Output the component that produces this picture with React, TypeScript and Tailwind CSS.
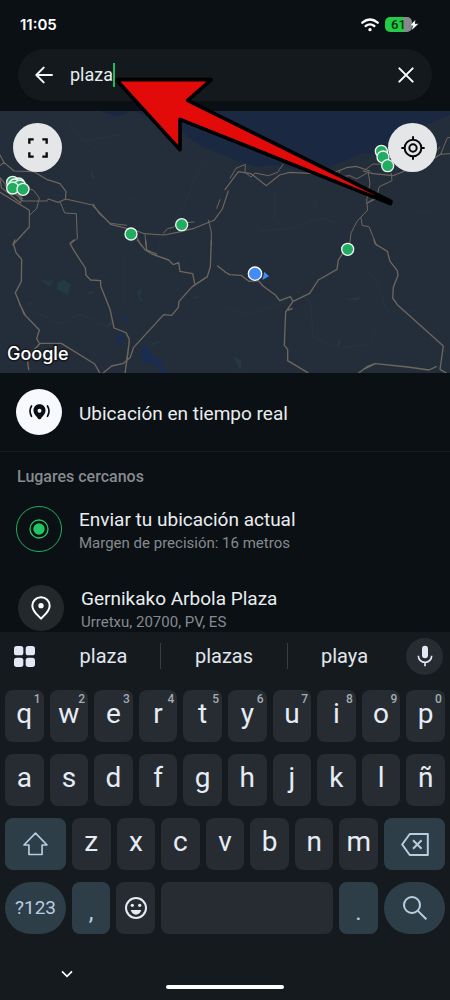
import React from "react";

const markers = [
  [38, 214], [56, 219], [44, 222], [60, 225], [38, 231], [69, 235],
  [393, 369], [545, 341], [1144, 121], [1149, 138], [1163, 164], [1043, 415],
];

function StatusBar() {
  return (
    <header className="flex h-[49px] shrink-0 items-center justify-between pl-5 pr-[31px]">
      <time className="font-['Inter',sans-serif] text-[15px] leading-5 font-semibold text-white">11:05</time>
      <div className="flex items-center gap-[6px]">
        <svg viewBox="0 0 54 42" className="h-[14px] w-[18px]" fill="none" stroke="#fff" strokeWidth="7" strokeLinecap="round" role="img" aria-label="Wi-Fi">
          <path d="M4 14Q27-5 50 14" />
          <path d="M14 24Q27 14 40 24" />
          <circle cx="27" cy="35" r="5" fill="#fff" stroke="none" />
        </svg>
        <div className="flex items-center">
          <div className="flex h-[15px] w-[27px] items-center justify-center rounded-[5px] bg-linear-to-r from-[#23cc45] from-70% to-[#85898c] to-70% text-[13px] leading-[15px] font-medium text-[#0e2f17]">
            61
          </div>
          <svg viewBox="0 0 30 36" className="-ml-[3px] h-[12px] w-[10px]" aria-hidden="true">
            <path d="M19 2 2 20h9L8 34 29 14H18Z" fill="#fff" stroke="#0b1014" strokeWidth="1" strokeLinejoin="round" />
          </svg>
        </div>
      </div>
    </header>
  );
}

function SearchBar() {
  return (
    <div className="px-[18px] pb-[10px]">
      <form role="search" className="flex h-[52px] items-center rounded-full bg-[#13191c] pl-[17px] pr-[18px]" onSubmit={(e) => e.preventDefault()}>
        <button type="button" aria-label="Atrás" className="mr-[17px]">
          <svg viewBox="0 0 54 54" className="size-[18px]" fill="none" stroke="#f4f6f7" strokeWidth="6" strokeLinecap="round" strokeLinejoin="round">
            <path d="M51 27H4M26 5 4 27l22 22" />
          </svg>
        </button>
        <input aria-label="Buscar" defaultValue="plaza" className="field-sizing-content bg-transparent text-[18px] leading-6 text-[#e9edef] outline-none" />
        <span className="h-6 w-[2px] bg-[#25b864]" />
        <button type="button" aria-label="Borrar" className="ml-auto">
          <svg viewBox="0 0 48 48" className="size-4" fill="none" stroke="#fff" strokeWidth="6" strokeLinecap="round">
            <path d="m4 4 40 40M44 4 4 44" />
          </svg>
        </button>
      </form>
    </div>
  );
}

function Map() {
  return (
    <section aria-label="Mapa" className="relative shrink-0">
      <svg viewBox="0 0 1350 786" className="block w-full" fill="none" strokeLinejoin="round" strokeLinecap="round">
        <rect width="1350" height="789" fill="#242e3b" />
        <path d="M300 0 350 17 400 0 450 22 520 30 560 74 600 104 675 134 720 154 770 167 830 163 900 177 990 167 1090 127 1160 132 1210 52 1280 42 1350 12V0Z" fill="#1a2941" />
        <g stroke="#273340" strokeWidth="3">
          <path d="M200 20 250 90 370 70M270 100l30 20M430 130l15-10M380 262h28M275 180l4 22M655 120l-60 60-50 120-60 80-20 60M370 440v130M100 600l80 40 60-30 90 40" />
          <path d="M825 240v80l15 20M760 330l20 30 100-10 80-30 60 20M940 270l10 25M1255 305h30M1190 160l-5 50M680 590l60 20 100-30 50-40 40 30 10 110 80 30 90-10 20-60M1080 450l50 60 30 90h90" />
        </g>
        <g fill="#243a42">
          <path d="m120 505 24 6 20-7-17 24ZM172 515l20-9 20 14-8 32-34-16ZM318 646l16-16 6 12ZM412 540l12-8-4 26 10 16-12-8ZM258 545l30-5-16 9ZM700 735l25 15-4 30ZM1040 565l45-8-12 11ZM1012 700l12-22-8 30ZM272 176l5 28 6-5ZM80 580l18-8-8 10ZM450 700l35-12-25 14ZM575 560l25-6-12 10Z" />
        </g>
        <g fill="#1b2c51">
          <path d="m342 682 32-21-10 42ZM374 608l10 14-9 22ZM425 705l20 6 12 24 30 15-2 22 22 12-25 5-14-30-43-6Z" />
        </g>
        <g stroke="#6f665c" strokeWidth="4">
          <g transform="translate(0 -18)">
            <path d="m0 150 12 22-12 10M12 172l30 26 60 2 40 24 38 12 18 24-2 24M0 218l18 22 50 40M58 280 70 288h70l5-6 30 10 22-10 80 18 55 58 80 20 20 8 60 4 40-8 50-12 60-24 25-34 18-54" strokeWidth="3.5" />
            <path d="M60 245 100 255l18 24-8 32-20 18M180 290l14 34 35 2 3 75-20 15M280 297l18 30 34 28 48 6M490 385l12-14 18-4 12-12 50-4M625 345l9 36v40M405 385l18 36M435 390l3 30M650 310l10-26" strokeWidth="3" />
            <path d="m0 220 4 28 58 46 3-12-50-40M0 262l88 54v50l-50 54" strokeWidth="3.5" />
          </g>
          <g transform="translate(675 -18)">
            <path d="m0 254 40-54 38 6 46 36 40-32 30-8 120 6 50-20 30-4 40 14M414 198 444 206l60 6 60-24 50-20 35-22" strokeWidth="3.5" />
            <path d="M15 220l18-30 28-12-1 24 18 14 12-12 40 8 28-10 16-24M345 198l-10 18 40-4 20 10 34-20M420 195l24-18 30 1M430 205l5 30-10 50 3 30-32 34-18 35-4 35M425 295l30-20 8-30 38-18-2-22M428 294l32-16M408 338l4 24 20 3 23 57M675 98h-8l-20 50 28-2M645 126l-20 22" strokeWidth="3" />
          </g>
          <g transform="translate(0 387)">
            <path d="m45 0-5 10 8 28 17 20-1 66-18 34 26 64 46 48-8 26 9 16-38 38 5 39M58 190l18 36M120 310h64l100 62 16 28M222 0l-12 10 12 22 34 52 2 22 14 14 30 2v16l28 70 12 56 36 14 10 20-4 40-9 62M388 304l-8 56M412 0l24 30 20 12 50 18 14 14 16-6 4 26 38 7 6 30M437 0l3 30 30 12M634 0l-3 80-9 30-45 30-40 44-2 18-20 24-24-2-90 98-10 30-20 18-36 8-28 23M653 78l22 17" />
          </g>
          <g transform="translate(675 387)">
            <path d="m0 96 14 8 34 2 24 18 28-2 14 16 38 28 12 16 32-12 8 14 50-24 26-40 56-32 4-28 20-30 6-20M204 184l-22 32-4 100 10 12v34l60 36M190 210l12-4M447 0l4 12 36 22 8 30 22 28 2 14-14 36-2 32 14 20 138 124-10 70 20 12M400 400l26-20 24-9 98 10 64 9 22-10M412 390l38-18" />
          </g>
        </g>
        <g fill="#20ad62" stroke="#eef5f1" strokeWidth="4">
          {markers.map(([x, y], i) => (
            <circle key={i} cx={x} cy={y} r="18" />
          ))}
        </g>
        <circle cx="765" cy="488" r="20" fill="#438bf6" stroke="#fff" strokeWidth="4" />
        <path d="m793 482 14 14-20 11Z" fill="#438bf6" />
      </svg>
      <button type="button" aria-label="Pantalla completa" className="absolute top-3 left-[13px] flex size-[49px] items-center justify-center rounded-full bg-[#e4e6e8]">
        <svg viewBox="0 0 60 60" className="size-5" fill="none" stroke="#07090b" strokeWidth="7">
          <path d="M4 17V4h13M43 4h13v13M56 43v13H43M17 56H4V43" />
        </svg>
      </button>
      <button type="button" aria-label="Mi ubicación" className="absolute top-3 right-[13px] flex size-[49px] items-center justify-center rounded-full bg-[#e4e6e8]">
        <svg viewBox="0 0 72 72" className="size-6" fill="none" stroke="#07090b" strokeWidth="6">
          <circle cx="36" cy="36" r="25" />
          <circle cx="36" cy="36" r="11" />
          <path d="M36 1v11M36 60v11M1 36h11M60 36h11" />
        </svg>
      </button>
      <span className="absolute bottom-[7px] left-[7px] font-['Inter',sans-serif] text-[18px] leading-6 font-medium text-white [paint-order:stroke] [-webkit-text-stroke:3px_#14191f]">
        Google
      </span>
    </section>
  );
}

function PlaceText({ title, detail }: { title: string; detail: string }) {
  return (
    <span className="flex flex-col pt-1">
      <span className="text-[19px] leading-6 text-[#e9edef]">{title}</span>
      <span className="text-[15px] leading-[22px] text-[#858a8e]">{detail}</span>
    </span>
  );
}

function Places() {
  return (
    <main className="min-h-0 flex-1 overflow-hidden">
      <button type="button" className="flex h-[79px] w-full items-center gap-[17px] border-b border-[#171c20] pl-4 text-left">
        <span className="flex size-[46px] items-center justify-center rounded-full bg-[#f8f9fc]">
          <svg viewBox="0 0 62 48" className="h-4 w-[21px]" fill="none" stroke="#0a0e12" strokeWidth="5" strokeLinecap="round">
            <path fillRule="evenodd" clipRule="evenodd" d="M31 1C20 1 13 9 13 19c0 12 9 18 14 25q4 4 8 0c5-7 14-13 14-25C49 9 42 1 31 1Zm0 13a6 6 0 1 1 0 12 6 6 0 0 1 0-12Z" fill="#0a0e12" stroke="none" />
            <path d="M7 6q-9 15 0 31M55 6q9 15 0 31" />
          </svg>
        </span>
        <span className="pt-1 text-[19px] leading-6 text-[#e9edef]">Ubicación en tiempo real</span>
      </button>
      <h2 className="px-[17px] pt-[15px] text-[16px] leading-5 font-medium text-[#868b8f]">Lugares cercanos</h2>
      <button type="button" className="mt-[17px] flex w-full items-center gap-[17px] pl-4 text-left">
        <span className="flex size-[46px] items-center justify-center rounded-full border border-[#24ae5c]">
          <svg viewBox="0 0 60 60" className="size-5" fill="none" stroke="#24c464" strokeWidth="4">
            <circle cx="30" cy="30" r="27" />
            <circle cx="30" cy="30" r="17" fill="#24c464" stroke="none" />
          </svg>
        </span>
        <PlaceText title="Enviar tu ubicación actual" detail="Margen de precisión: 16 metros" />
      </button>
      <button type="button" className="mt-[29px] flex w-full items-center gap-[17px] pl-[18px] text-left">
        <span className="flex size-[46px] items-center justify-center rounded-full bg-[#23282b]">
          <svg viewBox="0 0 60 72" className="h-6 w-5" fill="none" stroke="#fff" strokeWidth="6" strokeLinejoin="round">
            <path d="M30 4C15 4 4 15 4 29c0 17 15 27 26 39 11-12 26-22 26-39C56 15 45 4 30 4Z" />
            <circle cx="30" cy="29" r="8" fill="#fff" stroke="none" />
          </svg>
        </span>
        <PlaceText title="Gernikako Arbola Plaza" detail="Urretxu, 20700, PV, ES" />
      </button>
    </main>
  );
}

function Key({ label, hint }: { label: string; hint?: string }) {
  return (
    <button type="button" className="relative flex h-[52px] min-w-0 flex-1 items-center justify-center rounded-lg bg-[#262c32] pb-1 text-[28px] leading-8 text-[#e6ecf5]">
      {label}
      {hint && <span className="absolute top-[2px] right-[3px] text-[12px] leading-[14px] font-medium text-[#a4abb3]">{hint}</span>}
    </button>
  );
}

const special = "flex h-[52px] items-center justify-center bg-[#2d3e49] text-[#b9cde0]";

function Keyboard() {
  return (
    <section aria-label="Teclado" className="shrink-0 bg-[#151a1e] px-[5px]">
      <div className="flex h-12 items-center">
        <button type="button" aria-label="Herramientas" className="ml-[9px]">
          <svg viewBox="0 0 63 63" className="size-[21px]" fill="#e1e7f3">
            <rect width="28" height="28" rx="8" />
            <rect x="35" width="28" height="28" rx="8" />
            <rect y="35" width="28" height="28" rx="8" />
            <rect x="35" y="35" width="28" height="28" rx="8" />
          </svg>
        </button>
        <div className="ml-3 mr-[5px] flex flex-1 text-[20px] leading-[26px] text-[#e1e7ee]">
          <button type="button" className="flex-1">plaza</button>
          <button type="button" className="w-32 border-x border-[#393e43]">plazas</button>
          <button type="button" className="flex-1">playa</button>
        </div>
        <button type="button" aria-label="Dictar" className="mr-[2px] flex size-[37px] items-center justify-center rounded-full bg-[#262c32]">
          <svg viewBox="0 0 48 66" className="h-[22px] w-4" fill="none" stroke="#e1e7f3" strokeWidth="5">
            <rect x="15" y="2" width="18" height="38" rx="9" fill="#e1e7f3" stroke="none" />
            <path d="M4 32c0 11 8 20 20 20s20-9 20-20M24 52v12" />
          </svg>
        </button>
      </div>
      <div className="flex flex-col gap-3 pt-[10px]">
        <div className="flex gap-[6px]">
          {"qwertyuiop".split("").map((c, i) => (
            <Key key={c} label={c} hint={String((i + 1) % 10)} />
          ))}
        </div>
        <div className="flex gap-[6px]">
          {"asdfghjklñ".split("").map((c) => (
            <Key key={c} label={c} />
          ))}
        </div>
        <div className="flex gap-[6px]">
          <button type="button" aria-label="Mayúsculas" className={`${special} w-[61px] rounded-lg`}>
            <svg viewBox="0 0 76 72" className="h-6 w-[25px]" fill="none" stroke="currentColor" strokeWidth="5" strokeLinejoin="round">
              <path d="M38 3 3 39h15v29h40V39h15Z" />
            </svg>
          </button>
          {"zxcvbnm".split("").map((c) => (
            <Key key={c} label={c} />
          ))}
          <button type="button" aria-label="Retroceso" className={`${special} w-[61px] rounded-lg`}>
            <svg viewBox="0 0 84 70" className="h-[23px] w-7" fill="none" stroke="currentColor" strokeWidth="6" strokeLinejoin="round">
              <path d="M26 3h55v64H26L3 35ZM36 22l26 26M62 22 36 48" />
            </svg>
          </button>
        </div>
        <div className="flex gap-[6px]">
          <button type="button" className={`${special} w-[61px] rounded-full text-[19px] leading-6`}>?123</button>
          <button type="button" className={`${special} w-[38px] rounded-lg pt-2 text-[24px] leading-8`}>,</button>
          <button type="button" aria-label="Emojis" className="flex h-[52px] w-[39px] items-center justify-center rounded-lg bg-[#262c32]">
            <svg viewBox="0 0 66 66" className="size-[22px]" fill="#e6ecf5">
              <circle cx="33" cy="33" r="30" fill="none" stroke="#e6ecf5" strokeWidth="6" />
              <circle cx="22" cy="25" r="5" />
              <circle cx="44" cy="25" r="5" />
              <path d="M17 39h32q-5 14-16 14T17 39Z" />
            </svg>
          </button>
          <button type="button" aria-label="Espacio" className="h-[52px] flex-1 rounded-lg bg-[#262c32]" />
          <button type="button" className={`${special} w-[39px] rounded-lg pt-2 text-[24px] leading-8`}>.</button>
          <button type="button" aria-label="Buscar" className={`${special} w-[61px] rounded-full`}>
            <svg viewBox="0 0 72 72" className="size-6" fill="none" stroke="currentColor" strokeWidth="6">
              <circle cx="27" cy="27" r="24" />
              <path d="m44 44 26 26" />
            </svg>
          </button>
        </div>
      </div>
      <div className="relative h-[66px]">
        <button type="button" aria-label="Ocultar teclado" className="absolute top-9 left-14">
          <svg viewBox="0 0 36 24" className="h-2 w-3" fill="none" stroke="#fff" strokeWidth="5">
            <path d="m3 4 15 15L33 4" />
          </svg>
        </button>
        <span className="absolute bottom-[11px] left-1/2 h-1 w-[118px] -translate-x-1/2 rounded-full bg-white" />
      </div>
    </section>
  );
}

export default function App() {
  return (
    <div className="relative flex h-screen flex-col overflow-hidden bg-[#0b1014] font-['Roboto',sans-serif]">
      <StatusBar />
      <SearchBar />
      <Map />
      <Places />
      <Keyboard />
      <svg viewBox="0 0 852 402" className="pointer-events-none absolute top-[76px] left-[115px] h-[134px] w-[284px]" aria-hidden="true">
        <path d="M4 11H289L218 73 828 376 826 383 195 130V221Z" fill="#e30b09" stroke="#000" strokeWidth="11" strokeLinejoin="round" />
      </svg>
    </div>
  );
}
